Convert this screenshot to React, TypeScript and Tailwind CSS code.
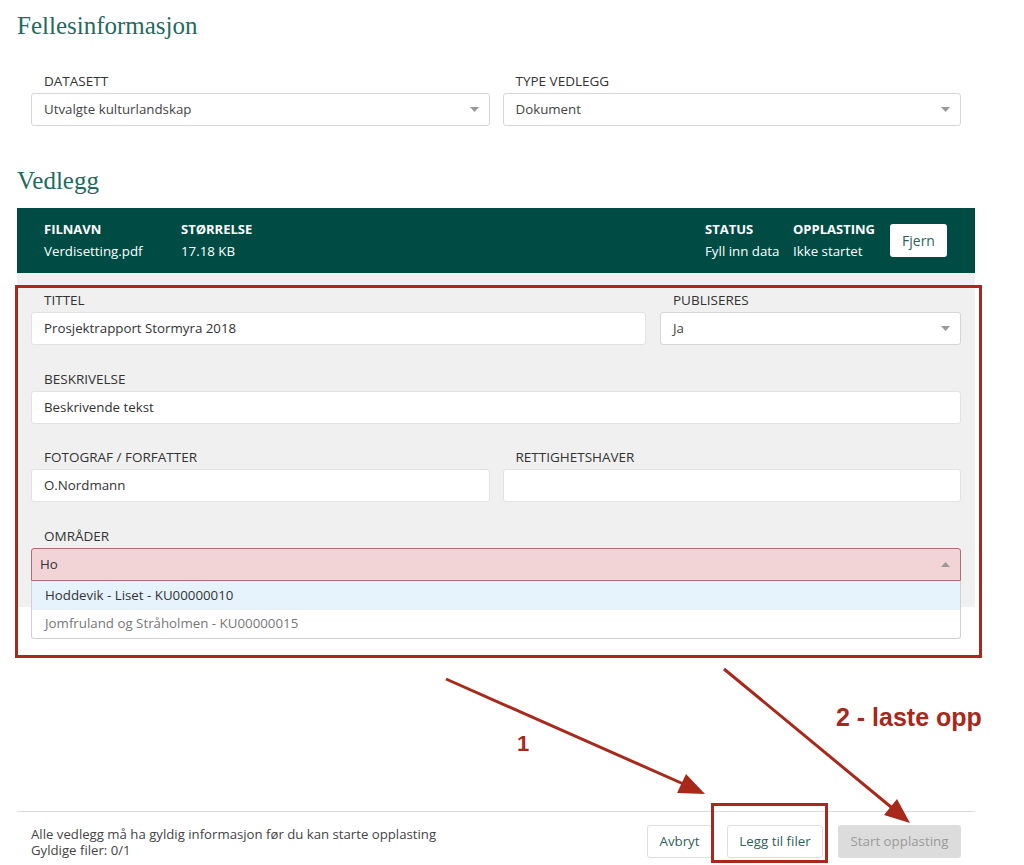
import React from "react";

const RED = "#a8281a";

function Caret({ up = false }: { up?: boolean }) {
  return (
    <svg width="9" height="5" viewBox="0 0 9 5" className="shrink-0">
      {up ? <path d="M0 5 L4.5 0 L9 5 Z" fill="#999" /> : <path d="M0 0 L9 0 L4.5 5 Z" fill="#999" />}
    </svg>
  );
}

function Label({ children }: { children: React.ReactNode }) {
  return <div className="pl-[13px] text-[13.5px] leading-[18px] font-medium text-[#333] mb-[3px]">{children}</div>;
}

function TextBox({ value }: { value?: string }) {
  return (
    <div className="h-[33px] bg-white border border-[#e2e2e2] rounded-[3px] px-[12px] flex items-center text-[13.3px] text-[#333]">
      {value}
    </div>
  );
}

function SelectBox({ value }: { value: string }) {
  return (
    <div className="h-[33px] bg-white border border-[#d6d6d6] rounded-[3px] pl-[12px] pr-[10px] flex items-center justify-between text-[13.3px] text-[#444]">
      <span>{value}</span>
      <Caret />
    </div>
  );
}

function Field({ label, children }: { label: string; children: React.ReactNode }) {
  return (
    <div>
      <Label>{label}</Label>
      {children}
    </div>
  );
}

function Annotations() {
  return (
    <>
      <div className="absolute left-[15px] top-[285px] w-[967px] h-[373px] border-[3px] border-[#a8281a] pointer-events-none" />
      <div className="absolute left-[711px] top-[803px] w-[117px] h-[60px] border-[3px] border-[#a8281a] pointer-events-none" />
      <div
        className="absolute left-[517px] top-[731px] text-[22px] leading-[26px] font-bold"
        style={{ color: RED, fontFamily: '"Liberation Sans", Arial, sans-serif' }}
      >
        1
      </div>
      <div
        className="absolute left-[836px] top-[702px] text-[25px] leading-[30px] font-bold"
        style={{ color: RED, fontFamily: '"Liberation Sans", Arial, sans-serif' }}
      >
        2 - laste opp
      </div>
      <svg className="absolute left-0 top-0 pointer-events-none" width="1024" height="865">
        <line x1="446" y1="679" x2="688" y2="786" stroke={RED} strokeWidth="3" />
        <polygon points="705,794 677,793 686,774" fill={RED} />
        <line x1="724" y1="669" x2="897" y2="812" stroke={RED} strokeWidth="3" />
        <polygon points="910,823 884,815 897,799" fill={RED} />
      </svg>
    </>
  );
}

export default function App() {
  return (
    <div
      className="relative w-[1024px] h-[865px] bg-white overflow-hidden"
      style={{ fontFamily: '"Open Sans", "Noto Sans", sans-serif' }}
    >
      <div className="ml-[17px] w-[958px]">
        <h1
          className="pt-[9px] text-[25px] leading-[34px] text-[#1f6b5e]"
          style={{ fontFamily: '"Liberation Serif", "Times New Roman", serif' }}
        >
          Fellesinformasjon
        </h1>

        <div className="mt-[29px] px-[14px] grid grid-cols-2 gap-[13px]">
          <Field label="DATASETT">
            <SelectBox value="Utvalgte kulturlandskap" />
          </Field>
          <Field label="TYPE VEDLEGG">
            <SelectBox value="Dokument" />
          </Field>
        </div>

        <h2
          className="mt-[38px] text-[25px] leading-[34px] text-[#1f6b5e]"
          style={{ fontFamily: '"Liberation Serif", "Times New Roman", serif' }}
        >
          Vedlegg
        </h2>

        <div className="mt-[10px] h-[65px] bg-[#004c45] pl-[27px] pr-[28px] pt-[10px] flex items-start text-white">
          <div className="w-[137px]">
            <div className="text-[13px] leading-[22px] font-bold">FILNAVN</div>
            <div className="text-[13.3px] leading-[22px]">Verdisetting.pdf</div>
          </div>
          <div>
            <div className="text-[13px] leading-[22px] font-bold">STØRRELSE</div>
            <div className="text-[13.3px] leading-[22px]">17.18 KB</div>
          </div>
          <div className="ml-auto w-[88px]">
            <div className="text-[13px] leading-[22px] font-bold">STATUS</div>
            <div className="text-[13.3px] leading-[22px] whitespace-nowrap">Fyll inn data</div>
          </div>
          <div className="w-[97px]">
            <div className="text-[13px] leading-[22px] font-bold">OPPLASTING</div>
            <div className="text-[13.3px] leading-[22px]">Ikke startet</div>
          </div>
          <button className="mt-[6px] w-[57px] h-[33px] bg-white rounded-[3px] text-[14px] text-[#2f5f5a]">Fjern</button>
        </div>

        <div className="relative bg-[#f0f0f0] px-[14px] pt-[18px] pb-[26px]">
          <div className="grid grid-cols-[1fr_301px] gap-[14px]">
            <Field label="TITTEL">
              <TextBox value="Prosjektrapport Stormyra 2018" />
            </Field>
            <Field label="PUBLISERES">
              <SelectBox value="Ja" />
            </Field>
          </div>
          <div className="mt-[25px]">
            <Field label="BESKRIVELSE">
              <TextBox value="Beskrivende tekst" />
            </Field>
          </div>
          <div className="mt-[24px] grid grid-cols-2 gap-[13px]">
            <Field label="FOTOGRAF / FORFATTER">
              <TextBox value="O.Nordmann" />
            </Field>
            <Field label="RETTIGHETSHAVER">
              <TextBox />
            </Field>
          </div>
          <div className="mt-[25px]">
            <Label>OMRÅDER</Label>
            <div className="relative">
              <div className="h-[33px] bg-[#f2d4d7] border border-[#a87070] rounded-t-[3px] pl-[8px] pr-[10px] flex items-center justify-between text-[13.3px] text-[#333]">
                <span>Ho</span>
                <Caret up />
              </div>
              <div className="absolute left-0 right-0 top-full bg-white border border-t-0 border-[#d0d0d0] rounded-b-[3px] text-[13.3px]">
                <div className="h-[29px] pl-[13px] flex items-center bg-[#e6f3fc] text-[#333]">Hoddevik - Liset - KU00000010</div>
                <div className="h-[28px] pl-[13px] flex items-center text-[#777]">Jomfruland og Stråholmen - KU00000015</div>
              </div>
            </div>
          </div>
        </div>

        <div className="mt-[204px] border-t border-[#dcdcdc] px-[14px] pt-[13px] flex items-start justify-between">
          <div className="pt-[1px] text-[13.2px] leading-[16px] text-[#444]">
            <div>Alle vedlegg må ha gyldig informasjon før du kan starte opplasting</div>
            <div>Gyldige filer: 0/1</div>
          </div>
          <div className="flex gap-[15px]">
            <button className="w-[65px] h-[33px] bg-white border border-[#dedede] rounded-[3px] text-[13.3px] text-[#2f5f5a]">
              Avbryt
            </button>
            <button className="w-[96px] h-[33px] bg-white border border-[#dedede] rounded-[3px] text-[13.3px] text-[#2f5f5a]">
              Legg til filer
            </button>
            <button className="w-[123px] h-[33px] bg-[#dcdcdc] rounded-[3px] text-[13.3px] text-[#9a9a9a]">
              Start opplasting
            </button>
          </div>
        </div>
      </div>
      <Annotations />
    </div>
  );
}
